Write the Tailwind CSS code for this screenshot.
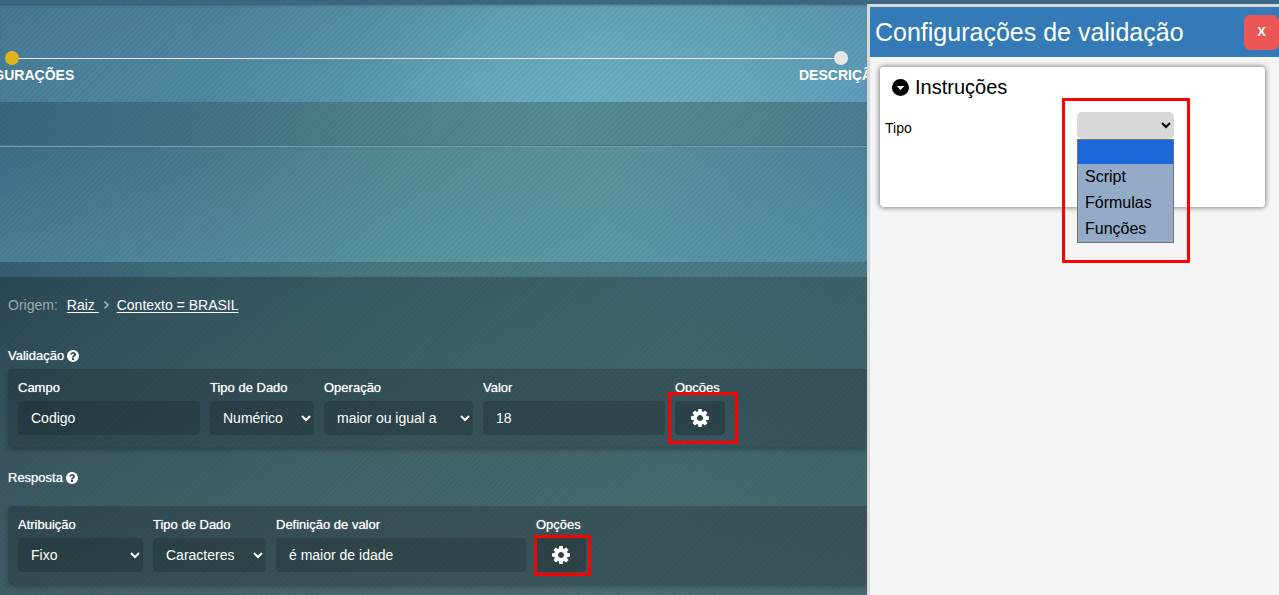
<!DOCTYPE html>
<html lang="pt-BR">
<head>
<meta charset="utf-8">
<meta name="viewport" content="width=device-width, initial-scale=1">
<title>Configurações de validação</title>
<script src="https://cdn.jsdelivr.net/npm/@tailwindcss/browser@4"></script>
</head>
<body class="flex min-h-screen flex-col overflow-hidden bg-[#3c6781] font-['Liberation_Sans',Arial,sans-serif] text-sm text-white">
<svg class="hidden" aria-hidden="true">
  <symbol id="gear" viewBox="0 0 1536 1536"><path fill="currentColor" d="M1024 768q0-106-75-181t-181-75-181 75-75 181 75 181 181 75 181-75 75-181zm512-109v222q0 12-8 23t-20 13l-185 28q-19 54-39 91 35 50 107 138 10 12 10 25t-9 23q-27 37-99 108t-94 71q-12 0-26-9l-138-108q-44 23-91 38-16 136-29 186-7 28-36 28H657q-14 0-24.500-8.500T621 1506l-28-184q-49-16-90-37l-141 107q-10 9-25 9-14 0-25-11-126-114-165-168-7-10-7-23 0-12 8-23 15-21 51-66.500t54-70.500q-27-50-41-99L29 913q-13-2-21-12.500T0 877V655q0-12 8-23t19-13l186-28q14-46 39-92-40-57-107-138-10-12-10-24 0-10 9-23 26-36 98.500-107.500T337 135q13 0 26 10l138 107q44-23 91-38 16-136 29-186 7-28 36-28h222q14 0 24.500 8.500T915 30l28 184q49 16 90 37l142-107q9-9 24-9 13 0 25 10 129 119 165 170 7 8 7 22 0 12-8 23-15 21-51 66.500t-54 70.500q26 50 41 98l183 28q13 2 21 12.500t8 23.500z"/></symbol>
  <symbol id="help" viewBox="0 0 1536 1536"><path fill="currentColor" d="M896 1248v-192q0-14-9-23t-23-9H672q-14 0-23 9t-9 23v192q0 14 9 23t23 9h192q14 0 23-9t9-23zm256-672q0-88-55.500-163T958 297t-170-41q-243 0-371 213-15 24 8 42l132 100q7 6 19 6 16 0 25-12 53-68 86-92 34-24 86-24 48 0 85.500 26t37.500 59q0 38-20 61t-68 45q-63 28-115.500 86.500T640 892v36q0 14 9 23t23 9h192q14 0 23-9t9-23q0-19 21.500-49.500T972 829q32-18 49-28.500t46-35 44.500-48 28-60.500 12.500-81zm384 192q0 209-103 385.500T1153.500 1433 768 1536t-385.500-103T103 1153.500 0 768t103-385.500T382.500 103 768 0t385.500 103T1433 382.500 1536 768z"/></symbol>
</svg>
<div class="h-1"></div>
<div class="flex flex-1">
  <main class="flex min-w-0 flex-1 flex-col overflow-hidden">
    <!-- Progress steps -->
    <header class="bg-[repeating-linear-gradient(135deg,rgba(0,0,0,0.04)_0px_2px,transparent_2px_4px),linear-gradient(180deg,rgba(60,90,110,0.15),transparent_80%),linear-gradient(100deg,#4a7f9a,#5089a3_25%,#5a97ae_42%,#67a8bd_56%,#6bafc4_68%,#68a9bd_85%,#5f9cbb)] pt-[47px] pr-[26px] pb-[17px] pl-3 shadow-[inset_0_3px_3px_-2px_rgba(0,0,0,0.35)]">
      <ol class="flex justify-between bg-[linear-gradient(#eee5e5,#eee5e5)] bg-[length:100%_1px] bg-[position:0_7px] bg-no-repeat text-sm leading-5 font-bold whitespace-nowrap">
        <li class="flex w-0 flex-col items-center"><span class="size-3.5 shrink-0 rounded-full bg-[#deb61c]"></span><span>CONFIGURAÇÕES</span></li>
        <li class="flex w-0 flex-col items-center"><span class="size-3.5 shrink-0 rounded-full bg-[#e6e6e6]"></span><span>DESCRIÇÃO</span></li>
      </ol>
    </header>
    <div class="h-11 border-b border-[#3f6f85] bg-[repeating-linear-gradient(135deg,rgba(0,0,0,0.04)_0px_2px,transparent_2px_4px),linear-gradient(95deg,#3b677f,#436f83_20%,#4d7f8c_42%,#568b98_65%,#52848f_85%,#4a7d93)]"></div>
    <div class="h-[116px] border-t border-[#7aa3b0] bg-[repeating-linear-gradient(135deg,rgba(0,0,0,0.04)_0px_2px,transparent_2px_4px),linear-gradient(180deg,transparent,rgba(95,165,180,0.35)),linear-gradient(95deg,#3f6c86,#4a7b8d_25%,#548b98_48%,#5a929e_70%,#548a9d_85%,#4c829c)]"></div>
    <div class="h-[15px] bg-[repeating-linear-gradient(135deg,rgba(0,0,0,0.04)_0px_2px,transparent_2px_4px),linear-gradient(90deg,#375e75,#40707f_25%,#4a7a82_50%,#4b7a88_75%,#4a7886)]"></div>
    <div class="flex-1 bg-[repeating-linear-gradient(135deg,rgba(0,0,0,0.04)_0px_2px,transparent_2px_4px),linear-gradient(180deg,transparent,rgba(90,120,122,0.45)),linear-gradient(100deg,#294855,#33545f_22%,#3b5e67_50%,#3e636c_75%,#3a606a)] pl-2">
      <nav class="flex pt-[18px] text-sm leading-5" aria-label="Origem">
        <span class="mr-[9px] text-[#9fa9ab]">Origem:</span>
        <a href="#" class="whitespace-pre underline underline-offset-2">Raiz </a>
        <svg class="mx-[3px] mt-1 h-3 w-3 text-[#aab4b6]" viewBox="0 0 12 12" fill="none" stroke="currentColor" stroke-width="1.500"><path d="M2.500 2.500 6 6 2.500 9.500"/></svg>
        <a href="#" class="underline underline-offset-2">Contexto = BRASIL</a>
      </nav>

      <h2 class="mt-[31px] flex items-center gap-[3px] text-[13px] leading-5 [text-shadow:0_0_1px_rgba(255,255,255,0.7)]">Validação <svg class="size-3"><use href="#help"/></svg></h2>
      <section class="mt-[3px] flex gap-2.5 rounded-l bg-black/17 px-2.5 pt-[9px] pb-3 shadow-[0_3px_5px_rgba(0,0,0,0.25)] [text-shadow:0_0_1px_rgba(255,255,255,0.7)]">
        <div class="flex w-[182px] flex-col gap-[3px]"><label for="campo" class="text-[13px] leading-5">Campo</label><input id="campo" value="Codigo" class="h-[34px] w-full rounded bg-black/15 px-[13px]"></div>
        <div class="flex w-[104px] flex-col gap-[3px]"><label for="tipo1" class="text-[13px] leading-5">Tipo de Dado</label><select id="tipo1" class="h-[34px] w-full rounded bg-black/15 pr-0.5 pl-[9px]"><option>Numérico</option></select></div>
        <div class="flex w-[149px] flex-col gap-[3px]"><label for="oper" class="text-[13px] leading-5">Operação</label><select id="oper" class="h-[34px] w-full rounded bg-black/15 pr-0.5 pl-[9px]"><option>maior ou igual a</option></select></div>
        <div class="flex w-[182px] flex-col gap-[3px]"><label for="valor" class="text-[13px] leading-5">Valor</label><input id="valor" value="18" class="h-[34px] w-full rounded bg-black/15 px-[13px]"></div>
        <div class="relative flex w-[50px] flex-col gap-[3px]"><span class="text-[13px] leading-5">Opções</span><button aria-label="Opções da validação" class="flex h-[34px] w-full items-center justify-center rounded bg-black/20"><svg class="size-[18px]"><use href="#gear"/></svg></button>
          <div class="pointer-events-none absolute top-3.5 -right-[13px] -bottom-[9px] -left-[7px] border-3 border-[#f00]"></div></div>
      </section>

      <h2 class="mt-[21px] flex items-center gap-[3px] text-[13px] leading-5 [text-shadow:0_0_1px_rgba(255,255,255,0.7)]">Resposta <svg class="size-3"><use href="#help"/></svg></h2>
      <section class="mt-[18px] flex gap-2.5 rounded-l bg-black/20 px-2.5 pt-[9px] pb-3 shadow-[0_3px_5px_rgba(0,0,0,0.25)] [text-shadow:0_0_1px_rgba(255,255,255,0.7)]">
        <div class="flex w-[125px] flex-col gap-[3px]"><label for="atrib" class="text-[13px] leading-5">Atribuição</label><select id="atrib" class="h-[34px] w-full rounded bg-black/15 pr-0.5 pl-[9px]"><option>Fixo</option></select></div>
        <div class="flex w-[113px] flex-col gap-[3px]"><label for="tipo2" class="text-[13px] leading-5">Tipo de Dado</label><select id="tipo2" class="h-[34px] w-full rounded bg-black/15 pr-0.5 pl-[9px]"><option>Caracteres</option></select></div>
        <div class="flex w-[250px] flex-col gap-[3px]"><label for="defin" class="text-[13px] leading-5">Definição de valor</label><input id="defin" value="é maior de idade" class="h-[34px] w-full rounded bg-black/15 px-[13px]"></div>
        <div class="relative flex w-[50px] flex-col gap-[3px]"><span class="text-[13px] leading-5">Opções</span><button aria-label="Opções da resposta" class="flex h-[34px] w-full items-center justify-center rounded bg-black/20"><svg class="size-[18px]"><use href="#gear"/></svg></button>
          <div class="pointer-events-none absolute top-5 -right-[5px] -bottom-1 -left-0.5 border-3 border-[#f00]"></div></div>
      </section>
    </div>
  </main>

  <aside class="w-[412px] shrink-0 border-t-3 border-l-3 border-[#d9d9d9] bg-[#f5f5f5] text-black">
    <header class="flex h-[50px] items-center justify-between bg-[#337ab7] pl-[5px] text-white">
      <h1 class="text-[25px] leading-8">Configurações de validação</h1>
      <button class="size-[35px] rounded-md bg-[#eb5757] text-[13px] font-bold" aria-label="Fechar">X</button>
    </header>
    <section class="mt-2.5 mr-3.5 ml-2.5 h-[140px] rounded bg-white px-[5px] pt-1.5 shadow-[0_0_5px_1px_rgba(0,0,0,0.45)]">
      <h2 class="flex items-center gap-1.5 pl-[7px] text-xl leading-7">
        <svg class="size-[17px]" viewBox="0 0 17 17"><circle cx="8.500" cy="8.500" r="8.500"/><path d="M4.500 7h8l-4 4z" fill="#fff"/></svg>Instruções</h2>
      <div class="mt-[11px] flex">
        <label for="tipo" class="w-48 pt-1.5 text-sm leading-5">Tipo</label>
        <div class="relative w-[97px]">
          <select id="tipo" class="block h-[27px] w-full rounded-[5px] bg-[#d8d8d8] pr-0.5 text-base"><option></option><option>Script</option><option>Fórmulas</option><option>Funções</option></select>
          <ul class="absolute top-full left-0 w-full border border-[#767676] bg-[#94abc7] text-base leading-[26px]">
            <li class="h-6 bg-[#1967d8]"></li>
            <li class="pl-[7px]">Script</li>
            <li class="pl-[7px]">Fórmulas</li>
            <li class="pl-[7px]">Funções</li>
          </ul>
          <div class="pointer-events-none absolute -top-3.5 -left-[15px] h-[165px] w-32 rounded-[1px] border-3 border-[#f00]"></div>
        </div>
      </div>
    </section>
  </aside>
</div>
</body>
</html>
